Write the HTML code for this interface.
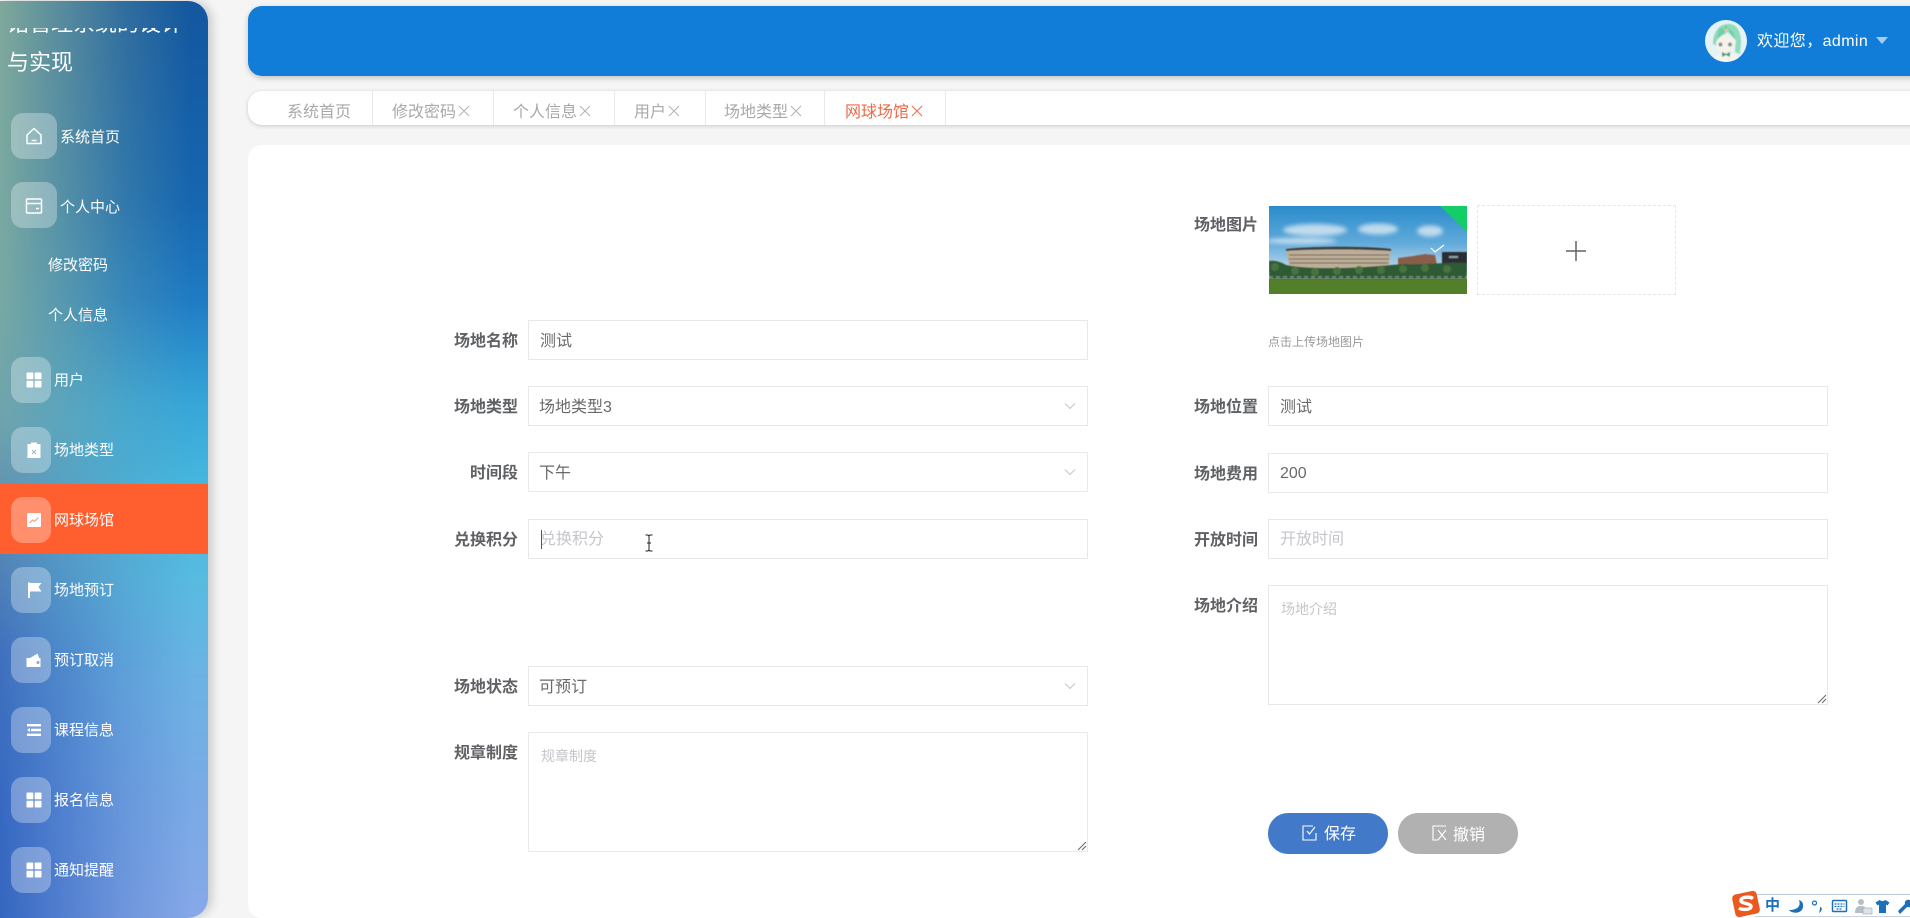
<!DOCTYPE html>
<html lang="zh-CN"><head><meta charset="utf-8"><title>网球场馆</title>
<style>
*{box-sizing:border-box;margin:0;padding:0}
html,body{width:1910px;height:918px;overflow:hidden;background:#f5f5f5;font-family:"Liberation Sans","Noto Sans CJK SC",sans-serif}
#page{position:relative;width:1910px;height:918px;overflow:hidden;background:#f5f5f5}
.a{position:absolute}
#side{left:0;top:1px;width:208px;height:917px;border-radius:0 20px 20px 0;overflow:hidden;background:linear-gradient(180deg,#14579f 0,#1666b0 200px,#1f7cc4 300px,#36a5d8 400px,#45b6de 480px,#58bbe0 580px,#6cb2e4 680px,#7aaae6 800px,#86a8e8 918px)}
#sideshadow{left:0;top:1px;width:208px;height:917px;border-radius:0 20px 20px 0;box-shadow:4px 0 10px rgba(0,0,0,.18)}
#sl{inset:0;background:linear-gradient(180deg,#7fa99b 0,#78a9a3 300px,#6fa3ad 420px,#5a8ab4 530px,#3f70bd 650px,#3768c1 800px,#3466c0 918px);-webkit-mask-image:linear-gradient(90deg,#000 0,rgba(0,0,0,.75) 20%,rgba(0,0,0,.28) 60%,transparent 92%);mask-image:linear-gradient(90deg,#000 0,rgba(0,0,0,.75) 20%,rgba(0,0,0,.28) 60%,transparent 92%)}
#active{left:0;top:484px;width:208px;height:70px;background:#ff5f2f}
.title{left:7px;width:190px;color:#fff;font-size:22px;line-height:39px;white-space:nowrap}
.box{left:11px;width:40px;height:46px;border-radius:12px;background:rgba(255,255,255,.3)}
.box.w{width:46px}
.ic{width:18px;height:18px}
.mt{color:#fff;font-size:15px;line-height:20px;white-space:nowrap}
#head{left:248px;top:6px;width:1680px;height:70px;border-radius:14px;background:#117dd8;box-shadow:0 2px 6px rgba(0,0,0,.22)}
#tabs{left:248px;top:91px;width:1680px;height:34px;border-radius:14px;background:#fff;box-shadow:0 1px 4px rgba(0,0,0,.18)}
.sep{top:91px;width:1px;height:34px;background:#e8e8e8}
.tab{top:100px;height:22px;font-size:16px;line-height:22px;color:#a9a9a9;white-space:nowrap}
.tab span{position:relative;top:2px}
.tab svg{position:relative;top:1px;margin-left:2px;vertical-align:-1px}
#main{left:248px;top:145px;width:1680px;height:773px;border-radius:14px;background:#fff}
.lb{width:100px;text-align:right;font-size:16px;line-height:22px;font-weight:700;color:#5f6165;white-space:nowrap}
.in{border:1px solid #e8e8e8;background:#fff;font-size:16px;line-height:22px;color:#6a6a6a;padding:3px 0 0 11px;display:flex;align-items:center;white-space:nowrap}
.in.s{padding-left:10px}
.in.ph{padding-top:1px}
.ph{color:#c4c6cb}
.ta{border:1px solid #e8e8e8;background:#fff;font-size:14px;line-height:20px;color:#c4c6cb;padding:13px 12px}
.btn{height:41px;width:120px;border-radius:20px;color:#fff;font-size:16px;line-height:40px}
</style></head><body><div id="page">

<div class="a" id="sideshadow"></div>
<div class="a" id="side"><div class="a" id="sl"></div></div>
<div class="a" id="active"></div>
<div class="a" style="left:0;top:28px;width:208px;height:60px;overflow:hidden">
<div class="a title" style="top:-24px">馆管理系统的设计</div>
<div class="a title" style="top:15px">与实现</div>
</div>

<div class="a box w" style="top:113px"></div>
<svg class="a ic" style="left:25px;top:127px" viewBox="0 0 18 18" fill="none" stroke="#fff" stroke-width="1.500"><path d="M9 1.500 16 8v8.500H2V8z" stroke-linejoin="round"/><path d="M6.500 13.500h5"/></svg>
<div class="a mt" style="left:60px;top:128px">系统首页</div>

<div class="a box w" style="top:182px"></div>
<svg class="a ic" style="left:25px;top:197px" viewBox="0 0 18 18" fill="none" stroke="#fff" stroke-width="1.500"><rect x="1.500" y="2" width="15" height="14" rx="1"/><path d="M1.500 6.500h15M11 11.500h3"/></svg>
<div class="a mt" style="left:60px;top:198px">个人中心</div>

<div class="a mt" style="left:48px;top:256px">修改密码</div>
<div class="a mt" style="left:48px;top:306px">个人信息</div>

<div class="a box" style="top:357px"></div>
<svg class="a ic" style="left:25px;top:371px" viewBox="0 0 18 18" fill="#fff"><rect x="1.500" y="1.500" width="6.800" height="6.800" rx=".8"/><rect x="9.700" y="1.500" width="6.800" height="6.800" rx=".8"/><rect x="1.500" y="9.700" width="6.800" height="6.800" rx=".8"/><rect x="9.700" y="9.700" width="6.800" height="6.800" rx=".8"/></svg>
<div class="a mt" style="left:54px;top:371px">用户</div>

<div class="a box" style="top:427px"></div>
<svg class="a ic" style="left:25px;top:441px" viewBox="0 0 18 18"><path d="M2.500 3H6V1.500h6V3h3.500v14h-13z" fill="#fff"/><path d="M7 9l4 4M11 9l-4 4" stroke="#9bb8c8" stroke-width="1"/></svg>
<div class="a mt" style="left:54px;top:441px">场地类型</div>

<div class="a box" style="top:497px"></div>
<svg class="a ic" style="left:25px;top:511px" viewBox="0 0 18 18"><rect x="2" y="2" width="14" height="14" fill="#fff" rx="1"/><path d="M4.500 12l3-3 2 1.500 4-4" stroke="#ff8f75" stroke-width="1" fill="none"/></svg>
<div class="a mt" style="left:54px;top:511px">网球场馆</div>

<div class="a box" style="top:567px"></div>
<svg class="a ic" style="left:25px;top:581px" viewBox="0 0 18 18" fill="#fff"><path d="M3 1.500h2V17H3zM5 2h11.500l-3 4 3 4.500H5z"/></svg>
<div class="a mt" style="left:54px;top:581px">场地预订</div>

<div class="a box" style="top:637px"></div>
<svg class="a ic" style="left:25px;top:651px" viewBox="0 0 18 18" fill="#fff"><path d="M1.500 7 5 7 12.500 2.500 14 6.500V7h1.500V16h-14z"/><circle cx="13" cy="11.500" r="1.500" fill="#86a8d8"/></svg>
<div class="a mt" style="left:54px;top:651px">预订取消</div>

<div class="a box" style="top:707px"></div>
<svg class="a ic" style="left:25px;top:721px" viewBox="0 0 18 18" fill="#fff"><path d="M2 3h14v2.400H2zM6 7.800h10v2.400H6zM2 12.600h14V15H2zM2 9l3-2v4z"/></svg>
<div class="a mt" style="left:54px;top:721px">课程信息</div>

<div class="a box" style="top:777px"></div>
<svg class="a ic" style="left:25px;top:791px" viewBox="0 0 18 18" fill="#fff"><rect x="1.500" y="1.500" width="6.800" height="6.800" rx=".8"/><rect x="9.700" y="1.500" width="6.800" height="6.800" rx=".8"/><rect x="1.500" y="9.700" width="6.800" height="6.800" rx=".8"/><rect x="9.700" y="9.700" width="6.800" height="6.800" rx=".8"/></svg>
<div class="a mt" style="left:54px;top:791px">报名信息</div>

<div class="a box" style="top:847px"></div>
<svg class="a ic" style="left:25px;top:861px" viewBox="0 0 18 18" fill="#fff"><rect x="1.500" y="1.500" width="6.800" height="6.800" rx=".8"/><rect x="9.700" y="1.500" width="6.800" height="6.800" rx=".8"/><rect x="1.500" y="9.700" width="6.800" height="6.800" rx=".8"/><rect x="9.700" y="9.700" width="6.800" height="6.800" rx=".8"/></svg>
<div class="a mt" style="left:54px;top:861px">通知提醒</div>

<div class="a" id="head"></div>
<svg class="a" style="left:1705px;top:20px" width="42" height="42" viewBox="0 0 42 42"><defs><clipPath id="av"><circle cx="21" cy="21" r="21"/></clipPath><filter id="ab"><feGaussianBlur stdDeviation=".5"/></filter></defs><g clip-path="url(#av)"><rect width="42" height="42" fill="#e6f3f6"/><g filter="url(#ab)"><path d="M8 24C8 10 16 3 25 4c8 1 11 9 11 18l-1 12-5-2 1-12-8-8-8 5-3 9z" fill="#8fdcbc"/><ellipse cx="20" cy="24" rx="9" ry="8" fill="#faf1ea"/><path d="M12 19l8-7 3-4 3 7 5 5-3-8-6-6-8 3z" fill="#6fd0ab"/><path d="M18 7l3 3 3-3-3 6z" fill="#f2c9a4"/><circle cx="15.500" cy="24.500" r="2" fill="#7a9896"/><circle cx="25" cy="24.500" r="2" fill="#7a9896"/><path d="M7 42c1-6 7-9 14-9s13 3 14 9z" fill="#f7f4ee"/><path d="M17 32l4 2 4-2v5l-4-2-4 2z" fill="#4f9a76"/></g></g></svg>
<div class="a" style="left:1757px;top:31px;color:#fff;font-size:16px;line-height:22px;white-space:nowrap;letter-spacing:.4px">欢迎您，admin</div>
<div class="a" style="left:1876px;top:37px;width:0;height:0;border-left:6px solid transparent;border-right:6px solid transparent;border-top:7px solid #a5cdf3"></div>

<div class="a" id="tabs"></div>
<div class="a sep" style="left:372px"></div><div class="a sep" style="left:493px"></div><div class="a sep" style="left:614px"></div><div class="a sep" style="left:705px"></div><div class="a sep" style="left:824px"></div><div class="a sep" style="left:945px"></div>
<div class="a tab" style="left:287px"><span>系统首页</span></div>
<div class="a tab" style="left:392px"><span>修改密码</span><svg width="12" height="12" viewBox="0 0 12 12" stroke="#b4b4b4" stroke-width="1"><path d="M1 1l10 10M11 1 1 11"/></svg></div>
<div class="a tab" style="left:513px"><span>个人信息</span><svg width="12" height="12" viewBox="0 0 12 12" stroke="#b4b4b4" stroke-width="1"><path d="M1 1l10 10M11 1 1 11"/></svg></div>
<div class="a tab" style="left:634px"><span>用户</span><svg width="12" height="12" viewBox="0 0 12 12" stroke="#b4b4b4" stroke-width="1"><path d="M1 1l10 10M11 1 1 11"/></svg></div>
<div class="a tab" style="left:724px"><span>场地类型</span><svg width="12" height="12" viewBox="0 0 12 12" stroke="#b4b4b4" stroke-width="1"><path d="M1 1l10 10M11 1 1 11"/></svg></div>
<div class="a tab" style="left:845px;color:#ec6a47"><span>网球场馆</span><svg width="12" height="12" viewBox="0 0 12 12" stroke="#ec6a47" stroke-width="1"><path d="M1 1l10 10M11 1 1 11"/></svg></div>

<div class="a" id="main"></div>

<!-- left column -->
<div class="a lb" style="left:418px;top:331px">场地名称</div>
<div class="a in" style="left:528px;top:320px;width:560px;height:40px">测试</div>
<div class="a lb" style="left:418px;top:397px">场地类型</div>
<div class="a in s" style="left:528px;top:386px;width:560px;height:40px">场地类型3</div>
<div class="a lb" style="left:418px;top:463px">时间段</div>
<div class="a in s" style="left:528px;top:452px;width:560px;height:40px">下午</div>
<div class="a lb" style="left:418px;top:530px">兑换积分</div>
<div class="a in ph" style="left:528px;top:519px;width:560px;height:40px">兑换积分</div>
<div class="a lb" style="left:418px;top:677px">场地状态</div>
<div class="a in s" style="left:528px;top:666px;width:560px;height:40px">可预订</div>
<div class="a lb" style="left:418px;top:743px">规章制度</div>
<div class="a ta" style="left:528px;top:732px;width:560px;height:120px">规章制度</div>

<svg class="a" style="left:1063px;top:402px" width="14" height="9" viewBox="0 0 14 9" fill="none" stroke="#c4c6cb" stroke-width="1"><path d="M2 1.500l5 5 5-5"/></svg>
<svg class="a" style="left:1063px;top:468px" width="14" height="9" viewBox="0 0 14 9" fill="none" stroke="#c4c6cb" stroke-width="1"><path d="M2 1.500l5 5 5-5"/></svg>
<svg class="a" style="left:1063px;top:682px" width="14" height="9" viewBox="0 0 14 9" fill="none" stroke="#c4c6cb" stroke-width="1"><path d="M2 1.500l5 5 5-5"/></svg>
<svg class="a" style="left:1077px;top:841px" width="10" height="10" viewBox="0 0 10 10" stroke="#666" stroke-width="1"><path d="M9 1 1 9M9 5 5 9"/></svg>

<div class="a" style="left:541px;top:530px;width:1px;height:19px;background:#555"></div>
<svg class="a" style="left:644px;top:534px" width="10" height="18" viewBox="0 0 10 18" fill="none" stroke="#222" stroke-width="1"><path d="M1.500 1h2.500L5 2l1-1h2.500M5 2v14M1.500 17H4l1-1 1 1h2.500M3 9h4"/></svg>

<!-- right column -->
<div class="a lb" style="left:1158px;top:215px">场地图片</div>
<svg class="a" style="left:1269px;top:206px" width="198" height="88" viewBox="0 0 198 88"><defs><linearGradient id="sky" x1="0" y1="0" x2="0" y2="1"><stop offset="0" stop-color="#2a8ccb"/><stop offset=".55" stop-color="#5fa9da"/><stop offset="1" stop-color="#c4dcea"/></linearGradient><filter id="bl"><feGaussianBlur stdDeviation="2"/></filter><filter id="b1"><feGaussianBlur stdDeviation=".5"/></filter></defs>
<rect width="198" height="66" fill="url(#sky)"/>
<g fill="#e6eff6" opacity=".75" filter="url(#bl)"><ellipse cx="46" cy="24" rx="32" ry="6"/><ellipse cx="32" cy="35" rx="36" ry="3"/><ellipse cx="109" cy="23" rx="20" ry="5.500"/><ellipse cx="161" cy="25" rx="13" ry="5.500"/></g>
<g filter="url(#b1)"><path d="M17 44c25-3 85-3 105 0l-2 16c-30 4-70 4-100 0z" fill="#bcae98"/><path d="M17 43c25-3 85-3 105 0v2c-25-2-85-2-105 0z" fill="#3e3d3a"/><path d="M20 49h100M20 53h100M21 57h98" stroke="#6d6557" stroke-width="1.100"/>
<path d="M129 52l15-2 12-2 10 1 2 10h-39z" fill="#8a5d4c"/><rect x="173" y="46" width="25" height="14" fill="#2c2e33"/><rect x="180" y="50" width="9" height="2" fill="#8fa0a8"/>
<path d="M0 55c6-1 12 1 17 4 15 3 30 3 50 3 30 0 50-3 70-4 15 1 40-2 61-1v16H0z" fill="#2e5a36"/>
<g fill="#47733f"><circle cx="6" cy="61" r="4"/><circle cx="26" cy="65" r="4"/><circle cx="46" cy="66" r="4"/><circle cx="68" cy="65" r="4"/><circle cx="90" cy="64" r="4"/><circle cx="112" cy="64" r="4"/><circle cx="134" cy="63" r="4"/><circle cx="156" cy="62" r="4"/><circle cx="178" cy="63" r="4"/></g>
<path d="M0 71h198" stroke="#7f9478" stroke-width="1.500" stroke-dasharray="4 3"/></g>
<rect y="73" width="198" height="15" fill="#537f2b"/><rect y="73" width="198" height="1" fill="#6a6a35"/>
<path d="M171 0h27v26z" fill="#13ce66"/><path d="M162 42l4 4 9-7" fill="none" stroke="#fff" stroke-width="1.200"/></svg>
<div class="a" style="left:1477px;top:205px;width:199px;height:90px;border:1px dashed #e6e6e6;background:#fff"></div>
<svg class="a" style="left:1566px;top:241px" width="20" height="20" viewBox="0 0 20 20" stroke="#606266" stroke-width="1.500"><path d="M10 0v20M0 10h20"/></svg>
<div class="a" style="left:1268px;top:333px;font-size:12px;line-height:18px;color:#999">点击上传场地图片</div>

<div class="a lb" style="left:1158px;top:397px">场地位置</div>
<div class="a in" style="left:1268px;top:386px;width:560px;height:40px">测试</div>
<div class="a lb" style="left:1158px;top:464px">场地费用</div>
<div class="a in" style="left:1268px;top:453px;width:560px;height:40px;padding-top:1px">200</div>
<div class="a lb" style="left:1158px;top:530px">开放时间</div>
<div class="a in ph" style="left:1268px;top:519px;width:560px;height:40px">开放时间</div>
<div class="a lb" style="left:1158px;top:596px">场地介绍</div>
<div class="a ta" style="left:1268px;top:585px;width:560px;height:120px">场地介绍</div>
<svg class="a" style="left:1817px;top:694px" width="10" height="10" viewBox="0 0 10 10" stroke="#666" stroke-width="1"><path d="M9 1 1 9M9 5 5 9"/></svg>

<div class="a btn" style="left:1268px;top:813px;background:#4279c8"></div>
<svg class="a" style="left:1302px;top:825px" width="15" height="16" viewBox="0 0 15 16" fill="none" stroke="#fff" stroke-width="1.100"><path d="M14 8v7H1V1h10M5 6l2.500 3L13 2"/></svg>
<div class="a" style="left:1324px;top:824px;color:#fff;font-size:16px;line-height:22px">保存</div>
<div class="a btn" style="left:1398px;top:813px;background:#b1b1b1"></div>
<svg class="a" style="left:1432px;top:825px" width="15" height="16" viewBox="0 0 15 16" fill="none" stroke="#fff" stroke-width="1.100"><path d="M14 1H1v14h5M6 5l8 10M14 5 6 15"/></svg>
<div class="a" style="left:1453px;top:825px;color:#fff;font-size:16px;line-height:22px">撤销</div>

<!-- IME toolbar -->
<div class="a" style="left:1755px;top:894px;width:155px;height:23px;background:#fff;border-top:1px solid #b9c8d8;border-bottom:1px solid #c9d5e2"></div>
<svg class="a" style="left:1731px;top:890px" width="30" height="28" viewBox="0 0 30 28"><rect x="2.500" y="2.500" width="25" height="23" rx="4" fill="#ea5a1e" transform="rotate(-12 15 14)"/><path d="M22 8.500c-3-2-11-2-12 1.500-1 4 11 3 10 7-1 3-9 3-12 1" fill="none" stroke="#fff" stroke-width="3.400"/></svg>
<div class="a" style="left:1765px;top:896px;font-size:15px;line-height:20px;font-weight:700;color:#1a70ba">中</div>
<svg class="a" style="left:1788px;top:896px" width="122" height="20" viewBox="0 0 122 20"><path d="M11 4c2 6-1 10-10 10 3 4 13 4 14-3 .5-4-1-6-4-7z" fill="#1a70ba"/><circle cx="26.500" cy="7" r="2" fill="none" stroke="#1a70ba" stroke-width="1.200"/><path d="M32 11c2.500 0 2.500 4-1 6l1-4z" fill="#1a70ba"/><rect x="44.500" y="4.500" width="14" height="11" rx="1" fill="none" stroke="#1a70ba" stroke-width="1.500"/><path d="M46.500 8h10M46.500 10.500h10M48.500 13h6" stroke="#1a70ba" stroke-width="1.200" stroke-dasharray="2 1"/><circle cx="73" cy="6" r="3" fill="#b6bfc9"/><path d="M67 17c0-6 3-7 6-7s6 1 6 7z" fill="#b6bfc9"/><rect x="75" y="12" width="9" height="6" fill="#dfe3e8" stroke="#9aa6b2" stroke-width=".6"/><path d="M87.500 6.500l4-2.500 2 1h2l2-1 4 2.500-2 3-1.500-1V17h-7V8.500l-1.500 1z" fill="#1a70ba"/><path d="M122 4c-3-1-6 1-5 4l-7 7 2 3 7-7c1 .3 2 .2 3 0z" fill="#1a70ba"/></svg>

</div></body></html>
